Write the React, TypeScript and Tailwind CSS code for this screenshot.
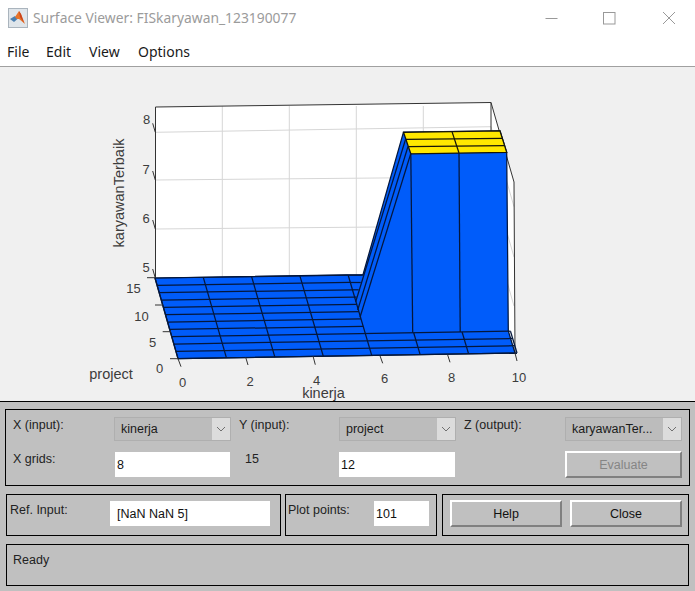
import React from "react";

type Pt = [number, number];
const MESH = "#04173c";
const BLUE = "#005cfa";
const YELLOW = "#ffe800";
const GRID = "#d6d6d6";
const TICK = "#333333";
const LABEL = "#3c3c3c";

const lerp = (a: number, b: number, t: number) => a + (b - a) * t;
const floor = (i: number, j: number): Pt => {
  const fx = 178 + 48.43 * i;
  const fy = 358.7 - 0.814 * i;
  const bx = 155 + 48.3 * i;
  const by = 278 - 0.7 * i;
  return [lerp(fx, bx, j / 11), lerp(fy, by, j / 11)];
};
const pts = (p: Pt[]) => p.map((q) => q.join(",")).join(" ");

function Line({ a, b, c = MESH, w = 1.25 }: { a: Pt; b: Pt; c?: string; w?: number }) {
  return <line x1={a[0]} y1={a[1]} x2={b[0]} y2={b[1]} stroke={c} strokeWidth={w} />;
}

function Surface() {
  const zLines: [number, number][] = [
    [132.3, 126.7],
    [180, 177],
    [229, 226],
  ];
  const meshLines: React.ReactNode[] = [];
  for (let j = 0; j <= 11; j++) {
    const end = j <= 3 ? 7 : 4;
    const b = floor(end, j);
    meshLines.push(<Line key={`r${j}`} a={floor(0, j)} b={b} />);
    if (j >= 8 && j <= 11) {
      const y = b[1];
      meshLines.push(<Line key={`x${j}`} a={b} b={[363 - (y - 274.5) * 0.284, y]} />);
    }
  }
  for (let i = 0; i <= 7; i++) {
    meshLines.push(<Line key={`c${i}`} a={floor(i, 0)} b={floor(i, i <= 4 ? 11 : 3)} />);
  }
  const ticks: [Pt, Pt][] = [
    [[155.3, 132.3], [152.7, 123.3]],
    [[155.3, 180], [152.7, 171]],
    [[155.3, 229], [152.7, 220]],
    [[155.3, 278], [152.7, 269]],
    [[155, 277.7], [147, 277.7]],
    [[163, 305], [155, 305]],
    [[171, 331.7], [162.7, 331.7]],
    [[178, 358.7], [170, 358.7]],
    [[178, 358.7], [181, 366.7]],
    [[245.7, 357.3], [248, 365]],
    [[313, 356], [315.3, 364.7]],
    [[380, 355.8], [382.7, 363.3]],
    [[447.7, 355], [450, 362.3]],
    [[515, 353], [517, 361]],
  ];
  const tickLabels: [string, number, number][] = [
    ["8", 146.5, 124],
    ["7", 146, 174],
    ["6", 146, 222.5],
    ["5", 146, 271.5],
    ["15", 133.5, 293],
    ["10", 141.5, 320.5],
    ["5", 152.5, 346.5],
    ["0", 159.5, 373],
    ["0", 182.5, 387],
    ["2", 250, 386],
    ["4", 316.5, 385],
    ["6", 384.5, 383],
    ["8", 451.5, 382],
    ["10", 519, 381.5],
  ];
  return (
    <svg width="695" height="334" viewBox="0 67 695 334" className="block">
      {/* axes box */}
      <polygon points={pts([[155.5, 107], [491, 102.5], [493, 274], [155.5, 278]])} fill="#ffffff" />
      <polygon points={pts([[491, 102.5], [514, 182], [515, 353], [493, 274]])} fill="#ffffff" />
      {[222.3, 289.3, 356.3, 423.3].map((x, k) => (
        <Line key={k} a={[x, 106]} b={[x, 278]} c={GRID} w={1} />
      ))}
      {zLines.map(([l, r], k) => (
        <React.Fragment key={k}>
          <Line a={[155.5, l]} b={[491, r]} c={GRID} w={1} />
          <Line a={[491, r]} b={[514, r + 80]} c={GRID} w={1} />
        </React.Fragment>
      ))}
      <polyline points={pts([[155.5, 278], [155.5, 107], [491, 102.5], [514, 182], [515, 353]])} fill="none" stroke="#333333" strokeWidth="1" />
      <Line a={[491, 102.5]} b={[491, 132]} c="#333333" w={1} />

      {/* surface */}
      <polygon
        points={pts([[155, 278], [363, 274.6], [403.5, 132], [500, 131], [506.7, 152.3], [508.3, 331], [515, 353], [178, 358.7]])}
        fill={BLUE}
        stroke={MESH}
        strokeWidth="1.25"
      />
      <polygon points={pts([[403.5, 132.3], [500, 131], [506.7, 152.3], [410.8, 153.8]])} fill={YELLOW} stroke="#14140a" strokeWidth="1.25" />
      <Line a={[406, 139.3]} b={[502.3, 138.3]} c="#14140a" />
      <Line a={[408.3, 146.7]} b={[504.5, 145.7]} c="#14140a" />
      <Line a={[452, 131.6]} b={[459, 153]} c="#14140a" />
      {meshLines}
      <Line a={[405.5, 139.5]} b={[355.7, 301.7]} />
      <Line a={[408, 146.5]} b={[357.7, 310]} />
      <Line a={[410.8, 153.5]} b={[360, 317.3]} />
      <Line a={[410.8, 153.5]} b={[412.7, 332.7]} />
      <Line a={[459, 153]} b={[460.2, 332]} />

      {ticks.map(([a, b], k) => (
        <Line key={k} a={a} b={b} c={TICK} w={1} />
      ))}
      <g fontFamily="'Liberation Sans', Arial, sans-serif" fill={LABEL}>
        {tickLabels.map(([t, x, y], k) => (
          <text key={k} x={x} y={y} fontSize="13" textAnchor="middle">
            {t}
          </text>
        ))}
        <text x="111" y="379" fontSize="14.5" textAnchor="middle">project</text>
        <text x="323.5" y="398" fontSize="14.5" textAnchor="middle">kinerja</text>
        <text x="124" y="193" fontSize="14.5" textAnchor="middle" transform="rotate(-90 124 193)">karyawanTerbaik</text>
      </g>
    </svg>
  );
}

function MatlabIcon() {
  return (
    <svg width="20" height="20" viewBox="0 0 20 20" className="block">
      <rect x="0.5" y="0.5" width="19" height="19" fill="#dfe5ea" stroke="#aab4bd" />
      <polygon points="2,11 7,8 9.5,11 6,14" fill="#4a7fb0" />
      <polygon points="7,9 11,3 13,6 17,16 13.5,13 11,11 9,11" fill="#e8742a" />
      <polygon points="11,3 13,6 16,15 12,9" fill="#c8431c" />
    </svg>
  );
}

function Chevron() {
  return (
    <svg width="10" height="6" viewBox="0 0 10 6">
      <polyline points="1,1 5,5 9,1" fill="none" stroke="#707070" strokeWidth="1" />
    </svg>
  );
}

function Select({ value, width }: { value: string; width: string }) {
  return (
    <div className={`flex h-6 items-stretch border border-[#afafaf] bg-[#bcbcbc] ${width}`}>
      <span className="flex-1 pl-[6px] pt-[4px] text-[12.5px] leading-[15px] text-[#1a1a1a]">{value}</span>
      <span className="flex w-[18px] items-center justify-center bg-[#dcdcdc]">
        <Chevron />
      </span>
    </div>
  );
}

function Field({ value, width }: { value: string; width: string }) {
  return <div className={`h-[25px] bg-white pt-[6px] text-[12.5px] leading-[15px] text-[#111111] ${width}`}>{value}</div>;
}

function Btn({ label, disabled, width }: { label: string; disabled?: boolean; width: string }) {
  return (
    <div
      className={`flex h-[27px] items-center justify-center border-2 border-t-white border-l-white border-r-[#808080] border-b-[#808080] bg-[#c0c0c0] pt-[2px] text-[12.5px] ${width} ${
        disabled ? "text-[#858585]" : "text-[#111111]"
      }`}
    >
      {label}
    </div>
  );
}

export default function App() {
  return (
    <div className="flex h-[591px] w-[695px] flex-col overflow-hidden bg-white font-['Liberation_Sans',Arial,sans-serif]">
      {/* title bar */}
      <div className="flex h-[36px] items-center pl-[8px]">
        <MatlabIcon />
        <span className="ml-[5px] font-['Noto_Sans',sans-serif] text-[13.85px] text-[#9b9b9b]">Surface Viewer: FISkaryawan_123190077</span>
        <div className="ml-auto flex items-center">
          <svg width="13" height="13" viewBox="0 0 13 13" className="mr-[45px]">
            <line x1="0.5" y1="6.5" x2="12.5" y2="6.5" stroke="#999999" />
          </svg>
          <svg width="13" height="13" viewBox="0 0 13 13" className="mr-[46px]">
            <rect x="0.5" y="0.5" width="11.5" height="11.5" fill="none" stroke="#999999" />
          </svg>
          <svg width="14" height="14" viewBox="0 0 14 14" className="mr-[19px]">
            <path d="M1 1 L13 13 M13 1 L1 13" stroke="#999999" fill="none" />
          </svg>
        </div>
      </div>
      {/* menu bar */}
      <div className="flex h-[31px] items-start border-b border-[#a0a0a0] pl-[7px] pt-[6px] font-['Noto_Sans',sans-serif] text-[14px] leading-[19px] text-[#1a1a1a]">
        <span className="w-[39px]">File</span>
        <span className="w-[43px]">Edit</span>
        <span className="w-[49px]">View</span>
        <span>Options</span>
      </div>
      {/* plot */}
      <div className="h-[334px] bg-[#f0f0f0]">
        <Surface />
      </div>
      {/* controls */}
      <div className="flex flex-1 flex-col gap-[8px] border-t border-black bg-[#c0c0c0] pt-[7px] text-[12.5px] text-[#222222]">
        <div className="ml-[5px] h-[77px] w-[685px] border border-black pl-[7px] pt-[7px]">
          <div className="flex items-start">
            <span className="-mt-px w-[101px]">X (input):</span>
            <Select value="kinerja" width="w-[117px]" />
            <span className="-mt-px ml-[8px] w-[100px]">Y (input):</span>
            <Select value="project" width="w-[117px]" />
            <span className="-mt-px ml-[8px] w-[101px]">Z (output):</span>
            <Select value="karyawanTer..." width="w-[117px]" />
          </div>
          <div className="mt-[11px] flex items-start">
            <span className="-mt-[2px] w-[102px]">X grids:</span>
            <Field value="8" width="w-[115px] pl-[2px]" />
            <span className="-mt-[2px] ml-[15px] w-[94px]">15</span>
            <Field value="12" width="w-[116px] pl-[2px]" />
            <span className="-mt-px ml-[110px]">
              <Btn label="Evaluate" disabled width="w-[117px]" />
            </span>
          </div>
        </div>
        <div className="ml-[6px] flex h-[42px] items-stretch">
          <div className="flex h-full w-[275px] items-start border border-black pl-[3px] pt-[6px]">
            <span className="w-[100px]">Ref. Input:</span>
            <Field value="[NaN NaN 5]" width="w-[160px] pl-[7px]" />
          </div>
          <div className="ml-[4px] flex h-full w-[152px] items-start border border-black pl-[2px] pt-[6px]">
            <span className="w-[86px]">Plot points:</span>
            <Field value="101" width="w-[55px] pl-[2px]" />
          </div>
          <div className="ml-[5px] flex h-full w-[247px] items-start gap-[8px] border border-black pl-[7px] pt-[5px]">
            <Btn label="Help" width="w-[112px]" />
            <Btn label="Close" width="w-[112px]" />
          </div>
        </div>
        <div className="ml-[6px] h-[42px] w-[683px] border border-black pl-[6px] pt-[6px]">Ready</div>
      </div>
    </div>
  );
}
